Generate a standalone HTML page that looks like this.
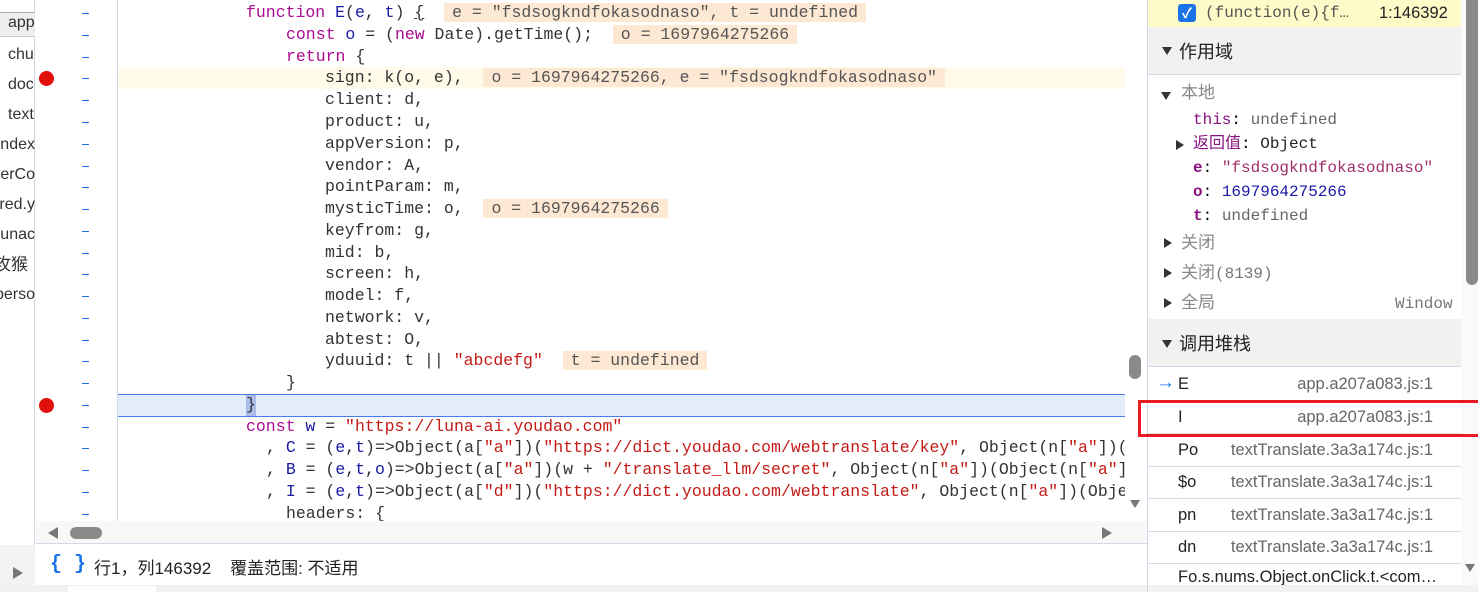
<!DOCTYPE html>
<html><head><meta charset="utf-8"><style>
*{margin:0;padding:0;box-sizing:border-box}
body{width:1478px;height:592px;overflow:hidden;background:#fff;position:relative;font-family:"Liberation Sans","Noto Sans CJK SC",sans-serif;}
.a{position:absolute}
.code{font-family:"Liberation Mono","Noto Sans CJK SC",monospace;font-size:16.5px;color:#333;white-space:pre;line-height:21.8px}
.k{color:#aa0d91}.v{color:#1a1aa6}.s{color:#c41a16}
.an{background:#fde8d4;color:#555;padding:0 8px}
.dash{position:absolute;left:82px;width:7px;height:1px;background:#1a73e8}
.lf{position:absolute;font-size:16px;color:#333;white-space:nowrap}
.mono{font-family:"Liberation Mono","Noto Sans CJK SC",monospace;font-size:16px;line-height:20px;white-space:nowrap}
.tri{display:inline-block;width:0;height:0;border-left:5px solid transparent;border-right:5px solid transparent;border-top:8px solid #333}
.trr{display:inline-block;width:0;height:0;border-top:5px solid transparent;border-bottom:5px solid transparent;border-left:8px solid #333}
.row{position:absolute;left:1148px;width:313px;height:33px;border-bottom:1px solid #dadce0;font-size:16.5px;color:#222}
.row .f{position:absolute;right:28px;top:7px;color:#666}
.row .n{position:absolute;left:30px;top:7px}
</style></head><body>
<div class="a" style="left:0;top:0;width:35px;height:585px;background:#fff;border-right:1px solid #d0d7e8"></div>
<div class="a" style="left:0;top:12px;width:35px;height:25px;background:#eee;border-top:1px solid #aaa;border-bottom:1px solid #ccc"></div>
<div class="lf" style="left:8px;top:14px;width:27px;overflow:hidden">app</div>
<div class="lf" style="left:8px;top:46px;width:27px;overflow:hidden">chu</div>
<div class="lf" style="left:8px;top:76px;width:27px;overflow:hidden">doc</div>
<div class="lf" style="left:8px;top:106px;width:27px;overflow:hidden">text</div>
<div style="position:absolute;left:0;top:136px;width:35px;overflow:hidden;font-size:16px;color:#333;direction:rtl;white-space:nowrap">index.</div>
<div style="position:absolute;left:0;top:166px;width:35px;overflow:hidden;font-size:16px;color:#333;direction:rtl;white-space:nowrap">perCo</div>
<div style="position:absolute;left:0;top:196px;width:35px;overflow:hidden;font-size:16px;color:#333;direction:rtl;white-space:nowrap">red.y</div>
<div style="position:absolute;left:0;top:226px;width:35px;overflow:hidden;font-size:16px;color:#333;direction:rtl;white-space:nowrap">unac</div>
<div style="position:absolute;left:-6px;top:254px;width:41px;overflow:hidden;font-size:17px;line-height:22px;color:#333;white-space:nowrap">攻猴</div>
<div style="position:absolute;left:0;top:286px;width:35px;overflow:hidden;font-size:16px;color:#333;direction:rtl;white-space:nowrap">perso</div>
<div class="a" style="left:0;top:545px;width:35px;height:40px;background:#f3f3f3"></div>
<div class="a trr" style="left:13px;top:567px;border-left-color:#777;border-top-width:6px;border-bottom-width:6px;border-left-width:10px"></div>

<div class="a" style="left:117px;top:0;width:1px;height:522px;background:#d0d7e8"></div>
<div class="a" style="left:118px;top:67px;width:1007px;height:22px;background:#fffbe8"></div>
<div class="a" style="left:118px;top:394px;width:1007px;height:23px;background:#e4ebfb;border-top:1px solid #4a7cf0;border-bottom:1px solid #4a7cf0"></div>
<div class="a" style="left:246px;top:395px;width:10px;height:21px;background:#a9bde8"></div>
<div class="a" style="left:39px;top:71px;width:15px;height:15px;border-radius:50%;background:#e0110b"></div>
<div class="a" style="left:39px;top:398px;width:15px;height:15px;border-radius:50%;background:#e0110b"></div>
<div class="dash" style="top:13px"></div><div class="dash" style="top:35px"></div><div class="dash" style="top:57px"></div><div class="dash" style="top:78px"></div><div class="dash" style="top:100px"></div><div class="dash" style="top:122px"></div><div class="dash" style="top:144px"></div><div class="dash" style="top:166px"></div><div class="dash" style="top:187px"></div><div class="dash" style="top:209px"></div><div class="dash" style="top:231px"></div><div class="dash" style="top:253px"></div><div class="dash" style="top:274px"></div><div class="dash" style="top:296px"></div><div class="dash" style="top:318px"></div><div class="dash" style="top:340px"></div><div class="dash" style="top:361px"></div><div class="dash" style="top:383px"></div><div class="dash" style="top:405px"></div><div class="dash" style="top:427px"></div><div class="dash" style="top:448px"></div><div class="dash" style="top:470px"></div><div class="dash" style="top:492px"></div><div class="dash" style="top:514px"></div>

<div class="a code" style="left:0;top:0;width:1125px;height:521px;overflow:hidden">
<div class="a" style="left:246px;top:2px"><span class="k">function</span> <span class="v">E</span>(<span class="v">e</span>, <span class="v">t</span>) <span style="text-decoration:underline">{</span>  <span class="an">e = "fsdsogkndfokasodnaso", t = undefined</span></div>
<div class="a" style="left:286px;top:24px"><span class="k">const</span> <span class="v">o</span> = (<span class="k">new</span> Date).getTime();  <span class="an">o = 1697964275266</span></div>
<div class="a" style="left:286px;top:46px"><span class="k">return</span> {</div>
<div class="a" style="left:325px;top:67px">sign: k(o, e),  <span class="an">o = 1697964275266, e = "fsdsogkndfokasodnaso"</span></div>
<div class="a" style="left:325px;top:89px">client: d,</div>
<div class="a" style="left:325px;top:111px">product: u,</div>
<div class="a" style="left:325px;top:133px">appVersion: p,</div>
<div class="a" style="left:325px;top:155px">vendor: A,</div>
<div class="a" style="left:325px;top:176px">pointParam: m,</div>
<div class="a" style="left:325px;top:198px">mysticTime: o,  <span class="an">o = 1697964275266</span></div>
<div class="a" style="left:325px;top:220px">keyfrom: g,</div>
<div class="a" style="left:325px;top:242px">mid: b,</div>
<div class="a" style="left:325px;top:263px">screen: h,</div>
<div class="a" style="left:325px;top:285px">model: f,</div>
<div class="a" style="left:325px;top:307px">network: v,</div>
<div class="a" style="left:325px;top:329px">abtest: O,</div>
<div class="a" style="left:325px;top:350px">yduuid: t || <span class="s">"abcdefg"</span>  <span class="an">t = undefined</span></div>
<div class="a" style="left:286px;top:372px">}</div>
<div class="a" style="left:246px;top:394px">}</div>
<div class="a" style="left:246px;top:416px"><span class="k">const</span> <span class="v">w</span> = <span class="s">"https://luna-ai.youdao.com"</span></div>
<div class="a" style="left:266px;top:437px">, <span class="v">C</span> = (<span class="v">e</span>,<span class="v">t</span>)=&gt;Object(a[<span class="s">"a"</span>])(<span class="s">"https://dict.youdao.com/webtranslate/key"</span>, Object(n[<span class="s">"a"</span>])(</div>
<div class="a" style="left:266px;top:459px">, <span class="v">B</span> = (<span class="v">e</span>,<span class="v">t</span>,<span class="v">o</span>)=&gt;Object(a[<span class="s">"a"</span>])(w + <span class="s">"/translate_llm/secret"</span>, Object(n[<span class="s">"a"</span>])(Object(n[<span class="s">"a"</span>]</div>
<div class="a" style="left:266px;top:481px">, <span class="v">I</span> = (<span class="v">e</span>,<span class="v">t</span>)=&gt;Object(a[<span class="s">"d"</span>])(<span class="s">"https://dict.youdao.com/webtranslate"</span>, Object(n[<span class="s">"a"</span>])(Obje</div>
<div class="a" style="left:286px;top:503px">headers: {</div>
</div>
<div class="a" style="left:1125px;top:0;width:22px;height:522px;background:#fff"></div>
<div class="a" style="left:1129px;top:355px;width:12px;height:24px;border-radius:6px;background:#8a8a8a"></div>
<div class="a tri" style="left:1130px;top:500px;border-top-color:#777"></div>
<div class="a" style="left:36px;top:521px;width:1111px;height:23px;background:#f8f8f8;border-bottom:1px solid #d0d7e8"></div>
<div class="a" style="left:48px;top:527px;width:0;height:0;border-top:6px solid transparent;border-bottom:6px solid transparent;border-right:10px solid #777"></div>
<div class="a" style="left:70px;top:527px;width:32px;height:12px;border-radius:6px;background:#8a8a8a"></div>
<div class="a" style="left:1102px;top:527px;width:0;height:0;border-top:6px solid transparent;border-bottom:6px solid transparent;border-left:10px solid #777"></div>
<div class="a" style="left:36px;top:545px;width:1111px;height:40px;background:#fff"></div>
<div class="a" style="left:50px;top:553px;font-size:20px;color:#1a73e8;font-family:'Liberation Mono',monospace;font-weight:bold">{ }</div>
<div class="a" style="left:94px;top:558px;font-size:17px;line-height:22px;color:#222;white-space:nowrap">行1，列146392&nbsp;&nbsp;&nbsp;&nbsp;覆盖范围: 不适用</div>
<div class="a" style="left:0;top:585px;width:1478px;height:7px;background:#f1f1f1"></div>
<div class="a" style="left:68px;top:586px;width:88px;height:6px;background:#fff"></div>

<div class="a" style="left:1147px;top:0;width:1px;height:592px;background:#d0d7e8"></div>
<div class="a" style="left:1148px;top:0;width:313px;height:27px;background:#fefbc8"></div>
<div class="a" style="left:1178px;top:4px;width:18px;height:18px;border-radius:3px;background:#1a73e8;color:#fff;font-size:14px;line-height:18px;text-align:center;font-weight:bold">✓</div>
<div class="a mono" style="left:1205px;top:3px;color:#555">(function(e){f…</div>
<div class="a" style="left:1379px;top:4px;font-size:16.5px;color:#222">1:146392</div>
<div class="a" style="left:1148px;top:27px;width:313px;height:48px;background:#f1f1f1;border-bottom:1px solid #d0d7e8"></div>
<div class="a tri" style="left:1162px;top:47px"></div>
<div class="a" style="left:1179px;top:40px;font-size:18px;line-height:24px;color:#222">作用域</div>
<div class="a tri" style="left:1161px;top:92px"></div>
<div class="a" style="left:1181px;top:82px;font-size:17px;line-height:22px;color:#888">本地</div>
<div class="a mono" style="left:1193px;top:110px"><span style="color:#881280">this</span>: <span style="color:#666">undefined</span></div>
<div class="a trr" style="left:1176px;top:140px"></div>
<div class="a mono" style="left:1193px;top:134px"><span style="color:#881280">返回值</span>: <span style="color:#222">Object</span></div>
<div class="a mono" style="left:1193px;top:158px"><b style="color:#881280">e</b>: <span style="color:#a0306a">"fsdsogkndfokasodnaso"</span></div>
<div class="a mono" style="left:1193px;top:182px"><b style="color:#881280">o</b>: <span style="color:#1a1aa6">1697964275266</span></div>
<div class="a mono" style="left:1193px;top:206px"><b style="color:#881280">t</b>: <span style="color:#666">undefined</span></div>
<div class="a trr" style="left:1164px;top:238px"></div>
<div class="a" style="left:1181px;top:232px;font-size:17px;line-height:22px;color:#888">关闭</div>
<div class="a trr" style="left:1164px;top:268px"></div>
<div class="a" style="left:1181px;top:262px;font-size:17px;line-height:22px;color:#888;white-space:nowrap">关闭<span class="mono" style="color:#777">(8139)</span></div>
<div class="a trr" style="left:1164px;top:298px"></div>
<div class="a" style="left:1181px;top:292px;font-size:17px;line-height:22px;color:#888">全局</div>
<div class="a mono" style="left:1395px;top:294px;color:#777">Window</div>
<div class="a" style="left:1148px;top:319px;width:313px;height:48px;background:#f1f1f1;border-bottom:1px solid #d0d7e8"></div>
<div class="a tri" style="left:1162px;top:340px"></div>
<div class="a" style="left:1179px;top:332px;font-size:18px;line-height:24px;color:#222">调用堆栈</div>
<div class="row" style="top:368px"><span class="a" style="left:8px;top:4px;color:#1a73e8;font-size:19px">→</span><span class="n">E</span><span class="f">app.a207a083.js:1</span></div>
<div class="row" style="top:401px"><span class="n">I</span><span class="f">app.a207a083.js:1</span></div>
<div class="row" style="top:434px"><span class="n">Po</span><span class="f">textTranslate.3a3a174c.js:1</span></div>
<div class="row" style="top:466px"><span class="n">$o</span><span class="f">textTranslate.3a3a174c.js:1</span></div>
<div class="row" style="top:499px"><span class="n">pn</span><span class="f">textTranslate.3a3a174c.js:1</span></div>
<div class="row" style="top:531px"><span class="n">dn</span><span class="f">textTranslate.3a3a174c.js:1</span></div>
<div class="row" style="top:564px;border:none;overflow:hidden;height:21px"><span class="n" style="white-space:nowrap;top:4px">Fo.s.nums.Object.onClick.t.&lt;com…</span></div>
<div class="a" style="left:1461px;top:0;width:17px;height:585px;background:#fafafa"></div>
<div class="a" style="left:1466px;top:0;width:12px;height:285px;border-radius:0 0 6px 6px;background:#8a8a8a"></div>
<div class="a tri" style="left:1465px;top:564px;border-top-color:#777"></div>
<div class="a" style="left:1138px;top:400px;width:345px;height:37px;border:3px solid #e81b23;z-index:5"></div>
</body></html>
